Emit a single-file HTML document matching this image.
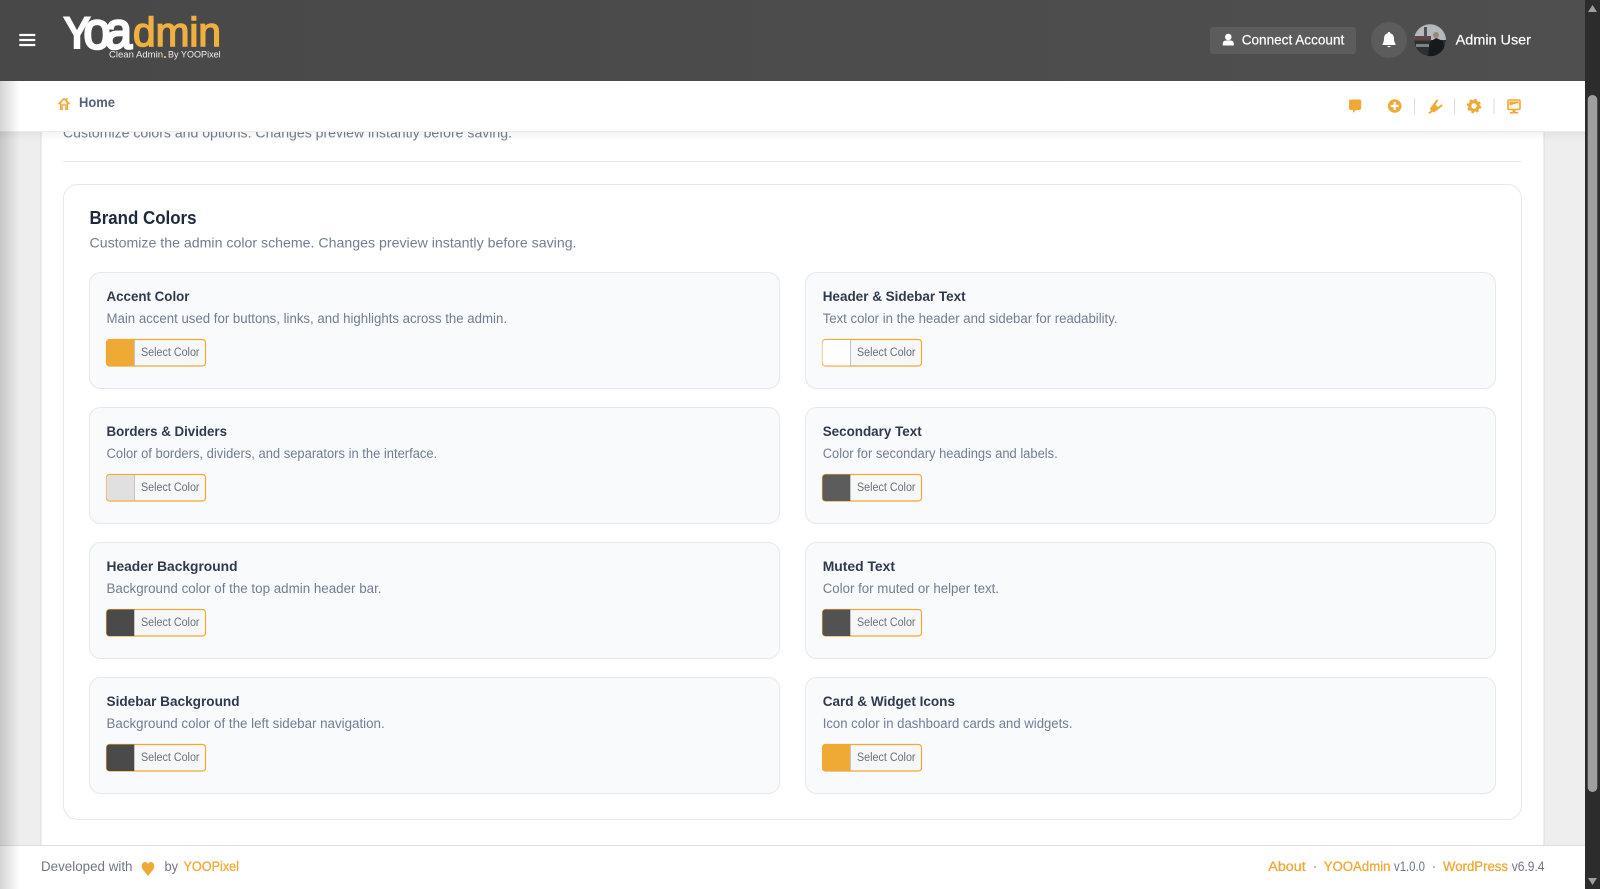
<!DOCTYPE html>
<html lang="en"><head><meta charset="utf-8"><title>YOOAdmin Brand Colors</title>
<style>
html,body{margin:0;padding:0;width:1600px;height:889px;overflow:hidden;background:#eee}
svg{display:block}
text{font-family:"Liberation Sans",Arial,sans-serif;white-space:pre}
.t{font-size:14px;font-weight:700;fill:#2f3a4d}
.d{font-size:13.5px;fill:#727e90}
.s{font-size:11.5px;fill:#6a717b}
.b{fill:#f6f7f7;stroke:#efa935;stroke-width:1.2}
.c{fill:#f8fafc;stroke:#e4e9f0;stroke-width:1}
.o{fill:#efa935}
.f{font-size:13.5px;fill:#6f7683}
.l{font-size:13.5px;fill:#efa935;stroke:#efa935;stroke-width:.3}
.div{stroke:#c3c4c7;stroke-width:1}
</style></head><body>
<svg xmlns="http://www.w3.org/2000/svg" width="1600" height="889" viewBox="0 0 1600 889">
<defs>
<linearGradient id="ls" x1="0" x2="1" y1="0" y2="0"><stop offset="0" stop-color="#000" stop-opacity=".17"/><stop offset="1" stop-color="#000" stop-opacity="0"/></linearGradient>
<linearGradient id="hd" x1="0" x2="1" y1="0" y2="0"><stop offset="0" stop-color="#484848"/><stop offset="1" stop-color="#4f4f4f"/></linearGradient>
<linearGradient id="ss" x1="0" x2="0" y1="0" y2="1"><stop offset="0" stop-color="#000" stop-opacity=".05"/><stop offset="1" stop-color="#000" stop-opacity="0"/></linearGradient>
<clipPath id="av"><circle cx="1430" cy="40.3" r="16"/></clipPath>
</defs>
<rect width="1600" height="889" fill="#eee"/>
<rect x="41" y="81" width="1503" height="770" fill="#fff" stroke="#dcdcdc"/>
<text x="63" y="137.5" font-size="14" fill="#727e90" textLength="449" lengthAdjust="spacingAndGlyphs">Customize colors and options. Changes preview instantly before saving.</text>
<rect x="63" y="161" width="1458.5" height="1" fill="#e2e5ea"/>
<rect x="63.5" y="184.5" width="1458" height="635" rx="14" fill="#fff" stroke="#e4e9f0" stroke-width="1"/>
<text x="89.5" y="224" font-size="18" font-weight="700" fill="#1e293b" textLength="107" lengthAdjust="spacingAndGlyphs">Brand Colors</text>
<text x="89.5" y="247.3" font-size="14" fill="#727e90" textLength="487" lengthAdjust="spacingAndGlyphs">Customize the admin color scheme. Changes preview instantly before saving.</text>

<rect class="c" x="89.5" y="272.5" width="690" height="116" rx="11"/>
<text class="t" x="106.5" y="301" textLength="83" lengthAdjust="spacingAndGlyphs">Accent Color</text>
<text class="d" x="106.5" y="323" textLength="400.5" lengthAdjust="spacingAndGlyphs">Main accent used for buttons, links, and highlights across the admin.</text>
<rect class="b" x="106.500" y="339.500" width="99" height="26.500" rx="3"/>
<path d="M109.500 339.500H134.500V366H109.500a3 3 0 0 1-3-3V342.500a3 3 0 0 1 3-3z" fill="#efa935"/><line class="div" x1="134.500" x2="134.500" y1="340" y2="365.500"/>
<text class="s" x="141" y="356" textLength="58.500" lengthAdjust="spacingAndGlyphs">Select Color</text>

<rect class="c" x="805.500" y="272.500" width="690" height="116" rx="11"/>
<text class="t" x="822.700" y="301" textLength="143" lengthAdjust="spacingAndGlyphs">Header &amp; Sidebar Text</text>
<text class="d" x="822.700" y="323" textLength="294.800" lengthAdjust="spacingAndGlyphs">Text color in the header and sidebar for readability.</text>
<rect class="b" x="822.500" y="339.500" width="99" height="26.500" rx="3"/>
<path d="M825.500 340H850.500V365.500H825.500a3 3 0 0 1-3-3V343a3 3 0 0 1 3-3z" fill="#fff"/><line class="div" x1="850.500" x2="850.500" y1="340" y2="365.500"/>
<text class="s" x="857" y="356" textLength="58.500" lengthAdjust="spacingAndGlyphs">Select Color</text>

<rect class="c" x="89.500" y="407.500" width="690" height="116" rx="11"/>
<text class="t" x="106.500" y="436" textLength="120.500" lengthAdjust="spacingAndGlyphs">Borders &amp; Dividers</text>
<text class="d" x="106.500" y="458" textLength="330.700" lengthAdjust="spacingAndGlyphs">Color of borders, dividers, and separators in the interface.</text>
<rect class="b" x="106.500" y="474.500" width="99" height="26.500" rx="3"/>
<path d="M109.500 475H134.500V500.500H109.500a3 3 0 0 1-3-3V478a3 3 0 0 1 3-3z" fill="#e0e0e0"/><line class="div" x1="134.500" x2="134.500" y1="475" y2="500.500"/>
<text class="s" x="141" y="491" textLength="58.500" lengthAdjust="spacingAndGlyphs">Select Color</text>

<rect class="c" x="805.500" y="407.500" width="690" height="116" rx="11"/>
<text class="t" x="822.700" y="436" textLength="99" lengthAdjust="spacingAndGlyphs">Secondary Text</text>
<text class="d" x="822.700" y="458" textLength="235" lengthAdjust="spacingAndGlyphs">Color for secondary headings and labels.</text>
<rect class="b" x="822.500" y="474.500" width="99" height="26.500" rx="3"/>
<path d="M825.500 474.500H850.500V501H825.500a3 3 0 0 1-3-3V477.500a3 3 0 0 1 3-3z" fill="#5c5c5c"/><line class="div" x1="850.500" x2="850.500" y1="475" y2="500.500"/>
<text class="s" x="857" y="491" textLength="58.500" lengthAdjust="spacingAndGlyphs">Select Color</text>

<rect class="c" x="89.500" y="542.500" width="690" height="116" rx="11"/>
<text class="t" x="106.500" y="571" textLength="131" lengthAdjust="spacingAndGlyphs">Header Background</text>
<text class="d" x="106.500" y="593" textLength="275" lengthAdjust="spacingAndGlyphs">Background color of the top admin header bar.</text>
<rect class="b" x="106.500" y="609.500" width="99" height="26.500" rx="3"/>
<path d="M109.500 609.500H134.500V636H109.500a3 3 0 0 1-3-3V612.500a3 3 0 0 1 3-3z" fill="#4a4a4a"/><line class="div" x1="134.500" x2="134.500" y1="610" y2="635.500"/>
<text class="s" x="141" y="626" textLength="58.500" lengthAdjust="spacingAndGlyphs">Select Color</text>

<rect class="c" x="805.500" y="542.500" width="690" height="116" rx="11"/>
<text class="t" x="822.700" y="571" textLength="72.300" lengthAdjust="spacingAndGlyphs">Muted Text</text>
<text class="d" x="822.700" y="593" textLength="176.300" lengthAdjust="spacingAndGlyphs">Color for muted or helper text.</text>
<rect class="b" x="822.500" y="609.500" width="99" height="26.500" rx="3"/>
<path d="M825.500 609.500H850.500V636H825.500a3 3 0 0 1-3-3V612.500a3 3 0 0 1 3-3z" fill="#525252"/><line class="div" x1="850.500" x2="850.500" y1="610" y2="635.500"/>
<text class="s" x="857" y="626" textLength="58.500" lengthAdjust="spacingAndGlyphs">Select Color</text>

<rect class="c" x="89.500" y="677.500" width="690" height="116" rx="11"/>
<text class="t" x="106.500" y="706" textLength="133" lengthAdjust="spacingAndGlyphs">Sidebar Background</text>
<text class="d" x="106.500" y="728" textLength="278.200" lengthAdjust="spacingAndGlyphs">Background color of the left sidebar navigation.</text>
<rect class="b" x="106.500" y="744.500" width="99" height="26.500" rx="3"/>
<path d="M109.500 744.500H134.500V771H109.500a3 3 0 0 1-3-3V747.500a3 3 0 0 1 3-3z" fill="#4a4a4a"/><line class="div" x1="134.500" x2="134.500" y1="745" y2="770.500"/>
<text class="s" x="141" y="761" textLength="58.500" lengthAdjust="spacingAndGlyphs">Select Color</text>

<rect class="c" x="805.500" y="677.500" width="690" height="116" rx="11"/>
<text class="t" x="822.700" y="706" textLength="132.300" lengthAdjust="spacingAndGlyphs">Card &amp; Widget Icons</text>
<text class="d" x="822.700" y="728" textLength="249.800" lengthAdjust="spacingAndGlyphs">Icon color in dashboard cards and widgets.</text>
<rect class="b" x="822.500" y="744.500" width="99" height="26.500" rx="3"/>
<path d="M825.500 744.500H850.500V771H825.500a3 3 0 0 1-3-3V747.500a3 3 0 0 1 3-3z" fill="#efa935"/><line class="div" x1="850.500" x2="850.500" y1="745" y2="770.500"/>
<text class="s" x="857" y="761" textLength="58.500" lengthAdjust="spacingAndGlyphs">Select Color</text>

<!-- footer -->
<rect x="0" y="845" width="1585" height="44" fill="#fff"/>
<rect x="0" y="845" width="1585" height="1" fill="#dedede"/>
<text class="f" x="41" y="871" textLength="91.500" lengthAdjust="spacingAndGlyphs">Developed with</text>
<path d="M148 876 L142.800 869.500 C140.800 866.500 142 862 145 862 C146.500 862 147.500 863 148 864 C148.500 863 149.500 862 151 862 C154 862 155.200 866.500 153.200 869.500 Z" class="o"/>
<text class="f" x="164.500" y="871" textLength="13.500" lengthAdjust="spacingAndGlyphs">by</text>
<text class="l" x="183.500" y="871" textLength="55.500" lengthAdjust="spacingAndGlyphs">YOOPixel</text>
<text class="l" x="1268.300" y="871" textLength="37.400" lengthAdjust="spacingAndGlyphs">About</text>
<circle cx="1315" cy="867" r=".9" fill="#8a8f98"/>
<text class="l" x="1323.700" y="871" textLength="66.800" lengthAdjust="spacingAndGlyphs">YOOAdmin</text>
<text class="f" x="1394" y="871" textLength="31" lengthAdjust="spacingAndGlyphs">v1.0.0</text>
<circle cx="1434" cy="867" r=".9" fill="#8a8f98"/>
<text class="l" x="1443" y="871" textLength="65" lengthAdjust="spacingAndGlyphs">WordPress</text>
<text class="f" x="1511.700" y="871" textLength="32.800" lengthAdjust="spacingAndGlyphs">v6.9.4</text>

<!-- subheader -->
<rect x="0" y="131" width="1585" height="10" fill="url(#ss)"/>
<rect x="0" y="81" width="1585" height="50" fill="#fff"/>
<rect x="0" y="131" width="1585" height="1" fill="#ececec"/>
<rect x="0" y="81" width="20" height="808" fill="url(#ls)"/>
<path d="M64 97.500 L58 103.500 L59 104.700 L60 103.800 V110 H62.800 V105.500 H65.200 V110 H68 V103.800 L69 104.700 L70 103.500 L67.500 101 V98 H66 V99.500 Z M64 99.700 L66.500 102.200 V108.700 H66.300 V104.200 H61.700 V108.700 H61.500 V102.200 Z" class="o" fill-rule="evenodd"/>
<text x="79" y="107" font-size="13.500" font-weight="700" fill="#56617a" textLength="36" lengthAdjust="spacingAndGlyphs">Home</text>
<!-- comment -->
<path d="M1351 99.500 H1359.500 A2 2 0 0 1 1361.200 101.500 V108 A2 2 0 0 1 1359.500 110 H1356 L1353 113 V110 H1351 A2 2 0 0 1 1349 108 V101.500 A2 2 0 0 1 1351 99.500 Z" class="o"/>
<!-- plus -->
<circle cx="1394.700" cy="106" r="6.800" class="o"/><path d="M1394.700 102V110M1390.700 106H1398.700" stroke="#fff" stroke-width="2.200"/>
<rect x="1414" y="98" width="1" height="16" fill="#dcdcdc"/>
<!-- plug -->
<path d="M1428.500 112.500 L1431 110.500 L1429.800 109 L1434 103 L1439.500 108.500 L1434 112.500 L1432.500 111.500 L1430.500 113.500 H1428.500Z" class="o"/>
<path d="M1435 103.500 L1437 100.500M1439 107.500 L1441.500 105.500" stroke="#efa935" stroke-width="2" stroke-linecap="round"/>
<rect x="1454" y="98" width="1" height="16" fill="#dcdcdc"/>
<!-- gear -->
<circle cx="1474" cy="106" r="4.300" fill="none" stroke="#efa935" stroke-width="3.200"/>
<circle cx="1474" cy="106" r="6.200" fill="none" stroke="#efa935" stroke-width="2" stroke-dasharray="2.500 2.370"/>
<rect x="1493.500" y="98" width="1" height="16" fill="#dcdcdc"/>
<!-- monitor -->
<rect x="1508" y="100" width="12" height="9.500" rx="1" fill="#fff3df" stroke="#efa935" stroke-width="1.600"/>
<path d="M1509.500 101.500H1518.500V102.800L1509.500 105.500Z" class="o"/>
<path d="M1512.500 110H1515.500V112H1518V113.500H1510V112H1512.500Z" class="o"/>

<!-- header -->
<rect x="0" y="0" width="1585" height="81" fill="url(#hd)"/>
<path d="M19.300 35H35.300M19.300 40H35.300M19.300 45H35.300" stroke="#fff" stroke-width="2.300"/>
<!-- logo -->
<text x="62" y="49" font-size="47" font-weight="700" fill="#fff" textLength="30" lengthAdjust="spacingAndGlyphs">Y</text>
<text x="83.500" y="48.500" font-size="52" fill="#fff" stroke="#fff" stroke-width="2.600" textLength="27" lengthAdjust="spacingAndGlyphs">o</text>
<text x="105" y="48.500" font-size="52" fill="#fff" stroke="#fff" stroke-width="2.600" textLength="27" lengthAdjust="spacingAndGlyphs">a</text>
<text x="133" y="46" font-size="41" fill="#efb040" stroke="#efb040" stroke-width="1.500" textLength="88" lengthAdjust="spacingAndGlyphs">dmin</text>
<text x="109" y="57.600" font-size="9.500" fill="#eee" textLength="54" lengthAdjust="spacingAndGlyphs">Clean Admin</text>
<rect x="164" y="56" width="2" height="2" fill="#efb040"/>
<text x="168" y="57.600" font-size="9.500" fill="#eee" textLength="52.700" lengthAdjust="spacingAndGlyphs">By YOOPixel</text>
<!-- connect -->
<rect x="1210" y="27" width="146" height="27" rx="3" fill="#5c5c5c"/>
<circle cx="1228.300" cy="37" r="3.300" fill="#fff"/>
<path d="M1222.800 45.500 V43.500 C1222.800 41.500 1224.500 40.500 1226 40.500 H1230.500 C1232 40.500 1233.800 41.500 1233.800 43.500 V45.500 Z" fill="#fff"/>
<text x="1241.700" y="44.300" font-size="14" fill="#fff" stroke="#fff" stroke-width=".2" textLength="102.600" lengthAdjust="spacingAndGlyphs">Connect Account</text>
<!-- bell -->
<circle cx="1389" cy="40" r="18" fill="#5c5c5c"/>
<path d="M1389 33 C1385.800 33 1384 35.500 1384 38.500 C1384 41.500 1383 43.200 1382.500 44 V45 H1395.500 V44 C1395 43.200 1394 41.500 1394 38.500 C1394 35.500 1392.200 33 1389 33Z M1387.200 46 A1.900 1.900 0 0 0 1390.800 46Z" fill="#fff"/>
<rect x="1388" y="32" width="2" height="2" fill="#fff"/>
<!-- avatar -->
<g clip-path="url(#av)">
<rect x="1414" y="24" width="32" height="33" fill="#b4b9bd"/>
<rect x="1414" y="40" width="32" height="17" fill="#2e3134"/>
<rect x="1414" y="36" width="17" height="4.500" fill="#5f4444"/>
<rect x="1424" y="27" width="3" height="10" fill="#4f5256"/>
<rect x="1416" y="44" width="13" height="3" fill="#7c8286"/>
<path d="M1428 57 L1430 42 L1436 38 L1443 41 L1446 57Z" fill="#17191b"/>
<circle cx="1436" cy="35" r="3" fill="#9c887b"/>
</g>
<text x="1455.700" y="44.500" font-size="14" fill="#fff" stroke="#fff" stroke-width=".2" textLength="75.300" lengthAdjust="spacingAndGlyphs">Admin User</text>

<!-- scrollbar -->
<rect x="1585" y="0" width="15" height="889" fill="#2c2c2c"/>
<rect x="1587.700" y="95" width="9.600" height="697" rx="4.800" fill="#9f9f9f"/>
<path d="M1592.500 5 L1597 12 H1588Z" fill="#9f9f9f"/>
<path d="M1592.500 885 L1597 878 H1588Z" fill="#9f9f9f"/>
</svg>
</body></html>
